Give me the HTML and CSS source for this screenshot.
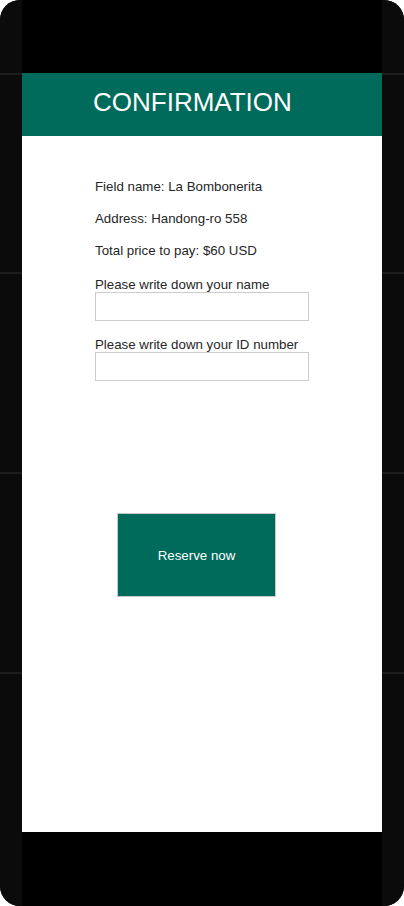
FILE: index.html
```html
<!DOCTYPE html>
<html lang="en">
<head>
<meta charset="utf-8">
<title>Confirmation</title>
<link rel="stylesheet" href="styles.css">
</head>
<body>
<div class="phone">
  <div class="side"></div>
  <div class="screen">
    <div class="bezel-top"></div>
    <header class="title-bar">CONFIRMATION</header>
    <main class="content">
      <p class="info">Field name: La Bombonerita</p>
      <p class="info">Address: Handong-ro 558</p>
      <p class="info">Total price to pay: $60 USD</p>
      <label class="field">
        <span class="field-label">Please write down your name</span>
        <input class="field-input" type="text">
      </label>
      <label class="field">
        <span class="field-label">Please write down your ID number</span>
        <input class="field-input" type="text">
      </label>
      <button class="reserve" type="button">Reserve now</button>
    </main>
    <div class="bezel-bottom"></div>
  </div>
  <div class="side"></div>
</div>
</body>
</html>
```
FILE: styles.css
```css
* { box-sizing: border-box; }

html, body {
  margin: 0;
  padding: 0;
  background: #ffffff;
}

.phone {
  width: 404px;
  height: 906px;
  border-radius: 20px;
  overflow: hidden;
  display: grid;
  grid-template-columns: 22px 1fr 22px;
  background: #0b0b0b;
  font-family: "Liberation Sans", Arial, sans-serif;
}

.side {
  background:
    linear-gradient(#1d1d1d, #1d1d1d) 0 73px / 100% 2px no-repeat,
    linear-gradient(#1d1d1d, #1d1d1d) 0 272px / 100% 2px no-repeat,
    linear-gradient(#1d1d1d, #1d1d1d) 0 472px / 100% 2px no-repeat,
    linear-gradient(#1d1d1d, #1d1d1d) 0 672px / 100% 2px no-repeat,
    #0b0b0b;
}

.screen {
  display: flex;
  flex-direction: column;
  background: #000000;
}

.bezel-top { height: 73px; background: #000; }
.bezel-bottom { height: 74px; background: #000; }

.title-bar {
  height: 63px;
  background: #006a5b;
  color: #ffffff;
  font-size: 26px;
  display: flex;
  align-items: center;
  padding: 0 0 5px 71px;
}

.content {
  flex: 1;
  background: #ffffff;
  padding: 43px 0 0 73px;
  display: flex;
  flex-direction: column;
  align-items: flex-start;
  color: #262626;
  font-size: 13.3px;
}

.info {
  margin: 0 0 16px 0;
  line-height: 16px;
}

.info + .field { margin-top: 2px; }

.field {
  display: flex;
  flex-direction: column;
  margin-bottom: 16px;
}

.field-label {
  line-height: 15px;
}

.field-input {
  width: 214px;
  height: 29px;
  margin: 0;
  border: 1px solid #cccccc;
  background: #fff;
  font: inherit;
}

.reserve {
  margin: 116px 0 0 22px;
  width: 159px;
  height: 84px;
  background: #006a5b;
  color: #ffffff;
  border: 1px solid #c8c8c8;
  font-family: "Liberation Sans", Arial, sans-serif;
  font-size: 13.3px;
  padding: 0;
}
```
